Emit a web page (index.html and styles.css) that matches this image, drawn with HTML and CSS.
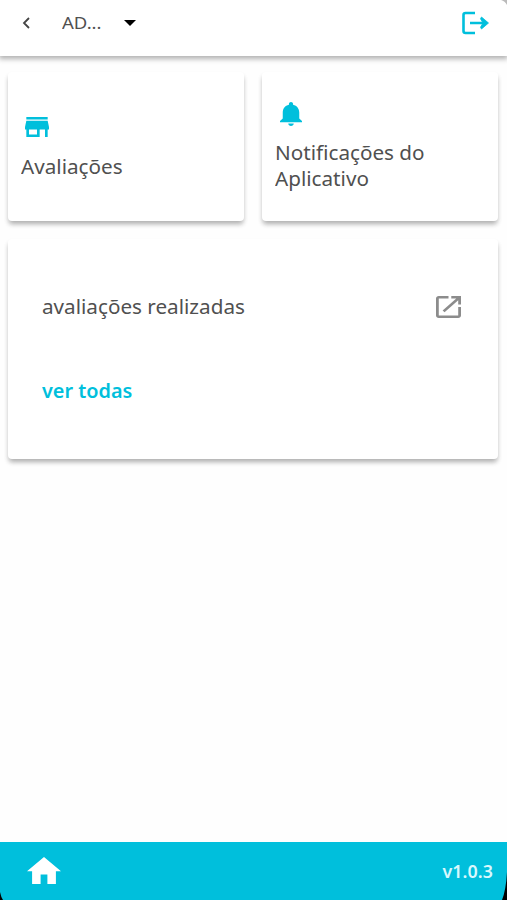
FILE: index.html
```html
<!DOCTYPE html>
<html lang="pt-BR">
<head>
    <meta charset="UTF-8">
    <meta name="viewport" content="width=device-width, initial-scale=1.0">
    <title>Avaliações</title>
    <link rel="stylesheet" href="styles.css">
</head>
<body>

<header class="topbar">
    <svg class="icon-back" viewBox="0 0 8 12"><path d="M7 1L2 6l5 5"/></svg>
    <span class="account">AD...</span>
    <svg class="icon-caret" viewBox="0 0 12 6"><path d="M0 0h12L6 6z"/></svg>
    <svg class="icon-logout" viewBox="0 0 28 24">
        <path d="M14 2H4.500Q2.500 2 2.500 4v16q0 2 2 2H14M9 12h14"/>
        <path class="arrow-head" d="M20.500 6L27.500 12l-7 6-1-1.800L22 12l-2.500-4.200z"/>
    </svg>
    <svg class="corner corner-top" viewBox="0 0 6 5"><path d="M0 0Q4 1 6 5V0z"/></svg>
</header>

<main class="content">
    <div class="tiles">
        <a class="card tile">
            <svg class="icon-store" viewBox="3 4 18 16" preserveAspectRatio="none"><path d="M20 4H4v2h16V4zm1 10v-2l-1-5H4l-1 5v2h1v6h10v-6h4v6h2v-6h1zm-9 4H6v-4h6v4z"/></svg>
            <span class="label">Avaliações</span>
        </a>
        <a class="card tile">
            <svg class="icon-bell" viewBox="4 2.500 16 19.500" preserveAspectRatio="none"><path d="M12 22c1.100 0 2-.9 2-2h-4c0 1.100.89 2 2 2zm6-6v-5c0-3.070-1.640-5.640-4.500-6.320V4c0-.83-.67-1.500-1.500-1.500s-1.500.67-1.500 1.500v.68C7.630 5.360 6 7.920 6 11v5l-2 2v1h16v-1l-2-2z"/></svg>
            <span class="label">Notificações do<br>Aplicativo</span>
        </a>
    </div>

    <section class="card summary">
        <div class="summary-head">
            <span class="label">avaliações realizadas</span>
            <svg class="icon-open" viewBox="3 3 18 18" preserveAspectRatio="none"><path d="M19 19H5V5h7V3H5c-1.110 0-2 .9-2 2v14c0 1.100.89 2 2 2h14c1.100 0 2-.9 2-2v-7h-2v7zM14 3v2h3.590l-9.830 9.830 1.410 1.410L19 6.410V10h2V3h-7z"/></svg>
        </div>
        <a class="see-all">ver todas</a>
    </section>
</main>

<footer class="bottombar">
    <svg class="icon-home" viewBox="2 3 20 17" preserveAspectRatio="none"><path d="M10 20v-6h4v6h5v-8h3L12 3 2 12h3v8z"/></svg>
    <span class="version">v1.0.3</span>
    <svg class="corner corner-left" viewBox="0 0 3 8"><path d="M0 0Q1 5 3 8H0z"/></svg>
    <svg class="corner corner-right" viewBox="0 0 6 28"><path d="M6 0Q5 18 1 28h5z"/></svg>
</footer>

</body>
</html>
```
FILE: styles.css
```css
:root {
    --primary-color: #00bfdc;
    --text-color: #505050;
}

* {
    box-sizing: border-box;
}

body {
    font-family: "Noto Sans", "Open Sans", sans-serif;
    margin: 0;
    height: 100vh;
    display: flex;
    flex-direction: column;
    overflow: hidden;
    background-color: #fefefe;
    color: var(--text-color);
}

svg {
    display: block;
    flex: none;
    fill: var(--primary-color);
}

.topbar {
    position: relative;
    height: 56px;
    padding: 0 18px 10px 22px;
    display: flex;
    align-items: center;
    background-color: #fff;
    box-shadow: 0 2px 5px 1px rgba(0, 0, 0, .3);
}

.icon-back {
    width: 8px;
    height: 12px;
    fill: none;
    stroke: #444;
    stroke-width: 1.8;
}

.account {
    margin-left: 32px;
    width: 40px;
    font-size: 17px;
    line-height: 24px;
    white-space: nowrap;
    transform: scaleX(1.09);
    transform-origin: left;
}

.icon-caret {
    width: 12px;
    height: 6px;
    margin-left: 22px;
    fill: #000;
}

.icon-logout {
    width: 28px;
    height: 24px;
    margin-left: auto;
    fill: none;
    stroke: var(--primary-color);
    stroke-width: 2.6;
}

.icon-logout .arrow-head {
    fill: var(--primary-color);
    stroke: var(--primary-color);
    stroke-width: .8;
    stroke-linejoin: round;
}

.content {
    flex: 1;
    padding: 16px 9px 0 8px;
}

.tiles {
    display: grid;
    grid-template-columns: 1fr 1fr;
    gap: 18px;
    margin-bottom: 18px;
}

.card {
    background-color: #fff;
    border-radius: 4px;
    box-shadow: 0 4px 5px -1px rgba(0, 0, 0, .26), 0 3px 5px rgba(0, 0, 0, .08);
}

.tile {
    height: 149px;
    padding: 1px 13px 0;
    display: flex;
    flex-direction: column;
    justify-content: center;
}

.icon-store {
    width: 24px;
    height: 20px;
    margin: 2px 0 17px 4px;
}

.icon-bell {
    width: 22px;
    height: 24px;
    margin: 0 0 14px 5px;
}

.label {
    font-size: 19px;
    line-height: 26px;
    white-space: nowrap;
    transform: scaleX(1.088);
    transform-origin: left;
}

.summary {
    height: 220px;
    padding: 55px 37px 0 34px;
}

.summary-head {
    display: flex;
    align-items: center;
    justify-content: space-between;
}

.icon-open {
    width: 25px;
    height: 22px;
    fill: #8c8c8c;
}

.see-all {
    display: inline-block;
    margin-top: 58px;
    font-size: 19px;
    line-height: 26px;
    font-weight: 600;
    color: var(--primary-color);
    transform: scaleX(1.045);
    transform-origin: left;
}

.bottombar {
    position: relative;
    height: 58px;
    padding: 0 14px 0 27px;
    display: flex;
    align-items: center;
    justify-content: space-between;
    background-color: var(--primary-color);
}

.icon-home {
    width: 34px;
    height: 27px;
    margin-bottom: 1px;
    fill: #fff;
}

.version {
    font-size: 17px;
    font-weight: 600;
    color: #d8f8fd;
    transform: scaleX(1.05);
    transform-origin: right;
}

/* rounded screen corners */
.corner {
    position: absolute;
    bottom: 0;
    fill: #000;
}

.corner-top {
    top: 0;
    right: 0;
    bottom: auto;
    width: 6px;
    height: 5px;
    fill: #bbb;
}

.corner-left {
    left: 0;
    width: 3px;
    height: 8px;
}

.corner-right {
    right: 0;
    width: 6px;
    height: 28px;
}
```
